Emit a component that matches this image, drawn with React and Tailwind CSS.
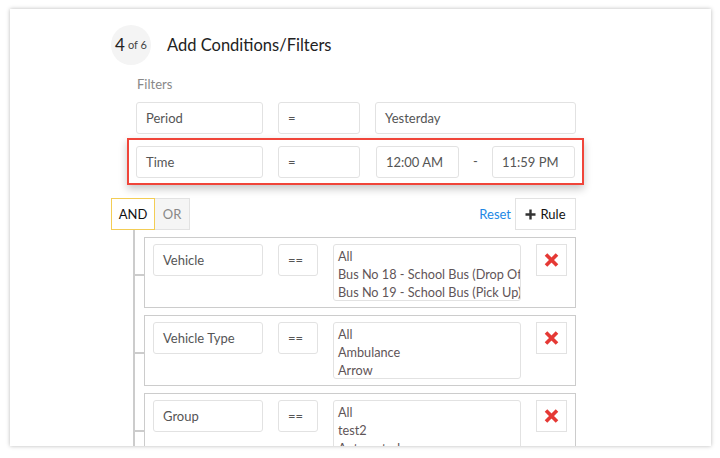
import React from "react";

const Field = ({ w, children, className = "" }) => (
  <div
    className={`h-8 shrink-0 flex items-center border border-[#e2e2e2] rounded-[3px] pl-[9px] pt-[2px] text-[13px] text-[#555] bg-white ${className}`}
    style={{ width: w }}
  >
    {children}
  </div>
);

const XIcon = () => (
  <svg width="15" height="14" viewBox="0 0 15 14">
    <path d="M2 1.5 L13 12.5 M13 1.5 L2 12.5" stroke="#e53935" strokeWidth="3.6" strokeLinecap="butt" />
  </svg>
);

const Rule = ({ label, options }) => (
  <div className="flex items-start">
    <div className="w-[9px] h-[2px] bg-[#ccc] mt-[37px] shrink-0" />
    <div className="w-[432px] border border-[#ccc] pl-2 pt-[6px] pb-[6px] flex items-start gap-[15px] bg-white">
      <Field w={110}>{label}</Field>
      <Field w={40}>==</Field>
      <div className="w-[188px] h-[57px] shrink-0 border border-[#e2e2e2] rounded-[3px] pl-1 pt-[2px] text-[12.7px] leading-[18px] text-[#5f5558] overflow-hidden whitespace-nowrap">
        {options.map((o) => (
          <div key={o}>{o}</div>
        ))}
      </div>
      <div className="w-[31px] h-8 shrink-0 border border-[#e2e2e2] flex items-center justify-center">
        <XIcon />
      </div>
    </div>
  </div>
);

export default function App() {
  return (
    <div className="w-[720px] h-[458px] bg-white pt-[9px] pl-[10px]" style={{ fontFamily: "Lato, 'Open Sans', sans-serif" }}>
      <div className="w-[701px] h-[437px] bg-white shadow-[0_0_4px_rgba(0,0,0,0.28)] overflow-hidden pt-4 pl-[101px]">
        <div className="w-[473px]">
          <div className="flex items-center gap-4">
            <div className="w-10 h-10 rounded-full bg-[#f4f4f4] flex items-center justify-center text-[#222]">
              <span className="text-[17px]">4</span>
              <span className="text-[11px] ml-[3px] text-[#444]">of 6</span>
            </div>
            <div className="text-[16.5px] text-[#222]">Add Conditions/Filters</div>
          </div>
          <div className="ml-[26px] mt-[10px] text-[13px] leading-[18px] text-[#888]">Filters</div>
          <div className="ml-[25px] mt-[9px] flex gap-[15px]">
            <Field w={127}>Period</Field>
            <Field w={82}>=</Field>
            <Field w={201}>Yesterday</Field>
          </div>
          <div className="ml-4 mt-1 w-[457px] border-2 border-[#f0453a] pl-[7px] pt-[6px] pb-[5px] flex items-center shadow-[0_4px_8px_rgba(0,0,0,0.22)] bg-white">
            <Field w={127}>Time</Field>
            <Field w={82} className="ml-[15px]">=</Field>
            <Field w={83} className="ml-4">12:00 AM</Field>
            <div className="w-[33px] text-center text-[13px] text-[#555]">-</div>
            <Field w={83}>11:59 PM</Field>
          </div>
          <div className="mt-[13px] w-[465px] flex items-center justify-between">
            <div className="flex">
              <div className="w-[44px] h-8 border border-[#f3cd55] flex items-center justify-center pt-px text-[13px] text-[#111] bg-white">AND</div>
              <div className="w-[35px] h-8 border border-l-0 border-[#e2e2e2] bg-[#f5f5f5] flex items-center justify-center pt-px text-[13px] text-[#888]">OR</div>
            </div>
            <div className="flex items-center gap-1">
              <span className="text-[13px] text-[#1e88e5] pt-px">Reset</span>
              <div className="w-[61px] h-8 border border-[#e2e2e2] flex items-center justify-center gap-1 text-[13px] text-[#111]">
                <svg width="11" height="11" viewBox="0 0 11 11">
                  <path d="M5.5 0.5 V10.5 M0.5 5.5 H10.5" stroke="#333" strokeWidth="2.4" />
                </svg>
                <span className="pt-px">Rule</span>
              </div>
            </div>
          </div>
          <div className="ml-[22px] border-l-2 border-[#ccc] pt-[7px] flex flex-col gap-[7px] pb-10">
            <Rule label="Vehicle" options={["All", "Bus No 18 - School Bus (Drop Off)", "Bus No 19 - School Bus (Pick Up)"]} />
            <Rule label="Vehicle Type" options={["All", "Ambulance", "Arrow"]} />
            <Rule label="Group" options={["All", "test2", "Automatedgroup"]} />
          </div>
        </div>
      </div>
    </div>
  );
}
